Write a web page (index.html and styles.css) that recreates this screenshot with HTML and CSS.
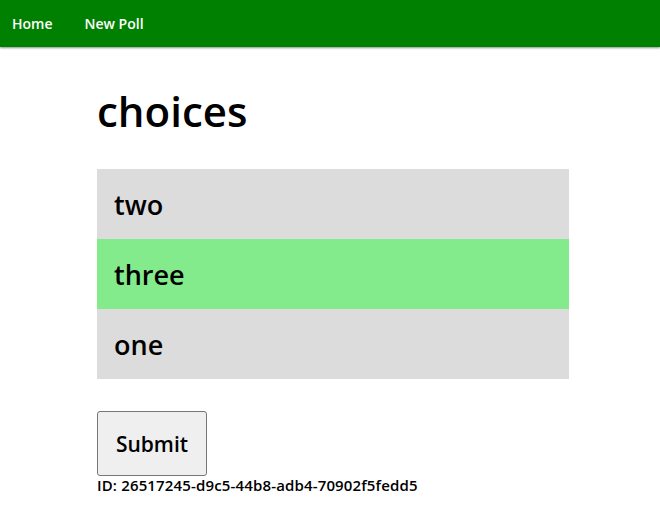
FILE: index.html
```html
<!DOCTYPE html>
<html>
<head>
<meta charset="utf-8">
<link rel="stylesheet" href="styles.css">
</head>
<body>
<nav class="nav">
  <a class="nav-link" href="#">Home</a>
  <a class="nav-link" href="#">New Poll</a>
</nav>
<main class="main">
  <h1 class="title">choices</h1>
  <ul class="choices">
    <li class="choice">two</li>
    <li class="choice selected">three</li>
    <li class="choice">one</li>
  </ul>
  <button class="submit">Submit</button>
  <div class="poll-id">ID: 26517245-d9c5-44b8-adb4-70902f5fedd5</div>
</main>
</body>
</html>
```
FILE: styles.css
```css
html, body {
  margin: 0;
  padding: 0;
  background: #fff;
}
body {
  font-family: "Open Sans", "Lato", sans-serif;
  color: #000;
}
.nav {
  background: #008000;
  height: 47px;
  display: flex;
  align-items: center;
  gap: 32px;
  padding-left: 12px;
  box-shadow: 0 1px 2px rgba(0,0,0,0.45);
}
.nav-link {
  color: #fff;
  text-decoration: none;
  font-weight: 600;
  font-size: 14px;
  font-family: "Open Sans", sans-serif;
}
.main {
  width: 472px;
  margin-left: 97px;
  padding-top: 36px;
}
.title {
  margin: 0;
  font-size: 42px;
  font-weight: 600;
  line-height: 56px;
}
.choices {
  list-style: none;
  margin: 30px 0 0;
  padding: 0;
}
.choice {
  height: 70px;
  display: flex;
  align-items: center;
  padding-left: 17px;
  background: #dcdcdc;
  font-size: 27px;
  font-weight: 600;
}
.choice.selected {
  background: #84eb8c;
}
.submit {
  margin-top: 32px;
  width: 110px;
  height: 65px;
  font-family: inherit;
  font-size: 21px;
  font-weight: 600;
  background: #efefef;
  border: 1px solid #767676;
  border-radius: 3px;
  color: #000;
  display: block;
}
.poll-id {
  font-size: 15px;
  font-weight: 600;
  line-height: 19px;
  letter-spacing: 0.15px;
  margin-top: 0;
}
```
